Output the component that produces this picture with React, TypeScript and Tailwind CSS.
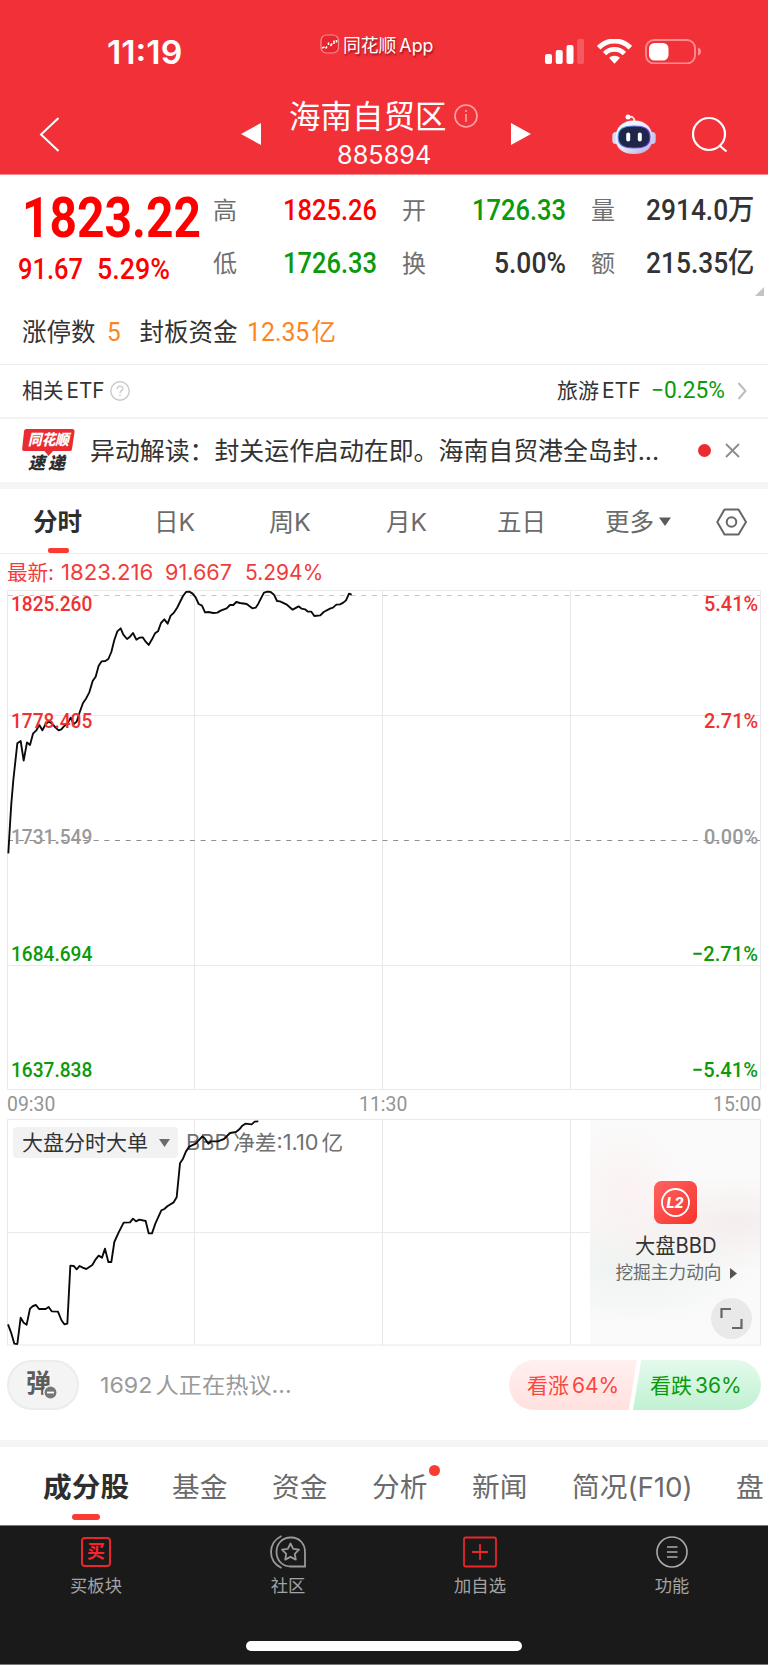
import { ReactNode, useLayoutEffect, useRef } from "react";
import clsx from "clsx";

type FitProps = {
  w: number;
  className?: string;
  children: ReactNode;
};

// Squeezes or stretches a line of text so that it fills exactly `w` pixels.
function Fit({ w, className, children }: FitProps) {
  const ref = useRef<HTMLSpanElement>(null);

  useLayoutEffect(() => {
    const el = ref.current;
    if (el) el.style.transform = `scaleX(${w / el.offsetWidth})`;
  }, [w, children]);

  return (
    <span className={clsx("block shrink-0", className)} style={{ width: w }}>
      <span ref={ref} className="inline-block origin-left whitespace-nowrap">
        {children}
      </span>
    </span>
  );
}

// Narrow gap between Chinese and Latin runs
function Gap() {
  return <i className="inline-block w-[3px]" />;
}

const DIN = "font-['Roboto','Noto_Sans_CJK_SC',sans-serif]";

const PRICE_LINE =
  "25,910 29,840 34,760 40,690 46,635 52,580 62,573 71,632 81,577 90,585 99,551 109,541 118,525 127,541 137,522 146,515 156,520 166,532 176,541 184,538 193,528 203,520 212,503 222,522 230,515 240,484 249,459 258,446 268,427 278,393 287,380 296,347 305,334 316,333 325,327 334,306 343,270 352,244 362,235 370,254 381,267 390,260 399,249 409,269 418,263 428,262 437,275 446,285 456,268 465,250 474,244 483,219 493,208 503,221 512,197 521,189 531,174 540,156 549,138 558,126 568,125 578,131 587,142 596,162 606,167 615,187 625,186 640,189 652,188 662,182 680,175 690,165 700,165 709,156 720,159 740,162 757,175 767,173 775,161 784,143 792,128 803,125 812,126 822,134 831,153 840,154 859,163 878,179 896,169 905,176 915,178 924,185 934,185 943,198 961,196 971,186 990,176 999,173 1009,164 1020,163 1030,158 1038,151 1047,131 1055,134";

const BBD_LINE =
  "24,643 33,667 43,701 52,702 62,623 71,638 80,644 90,596 99,588 108,585 117,597 137,597 146,591 155,604 174,605 184,630 193,643 202,641 211,467 221,468 230,478 239,468 248,473 259,477 277,465 287,448 296,437 306,443 315,416 325,456 334,456 343,396 356,367 371,338 390,337 399,326 408,334 418,329 437,333 446,370 456,370 466,341 484,301 493,297 503,288 521,277 530,262 540,160 549,146 558,124 568,110 587,101 596,91 607,79 615,86 625,101 634,94 653,94 672,87 690,69 708,66 718,58 727,47 736,41 755,43 764,35 775,34";

function StatusBar() {
  return (
    <div className="relative flex h-[84px] pt-[39px]">
      <Fit w={75} className="ml-[107px] text-[32px] font-semibold leading-[28px]">
        11:19
      </Fit>

      <div className="absolute left-[320px] top-[34px] flex h-[20px] items-center">
        <svg width="20" height="20" viewBox="0 0 20 20" fill="none">
          <rect x="1" y="1" width="17.5" height="18" rx="5.5" fill="#e5262e" stroke="#f88b8f" strokeWidth="1.2" />
          <path d="M2 14l2.500-1M5.500 14.500l1.500-2M8.500 11v-2.500M10.500 12l1.500-2.500M14 10V6.500M16.500 8.500V6" stroke="#fff" strokeWidth="1.6" />
        </svg>
        <Fit w={90} className="ml-[3px] mt-[3px] text-[18px] leading-[24px] [text-shadow:1px_2px_2px_rgba(90,0,0,.55)]">
          同花顺
          <Gap />
          App
        </Fit>
      </div>

      <svg className="ml-[363px]" width="39" height="25" viewBox="0 0 39 25" fill="#fff">
        <rect y="15" width="7" height="10" rx="2" />
        <rect x="10.7" y="11" width="7" height="14" rx="2" />
        <rect x="21.5" y="6" width="7" height="19" rx="2" />
        <rect x="32.2" width="7" height="25" rx="2" opacity=".2" />
      </svg>
      <svg className="ml-[13px]" width="35" height="25" viewBox="0 0 35 25" fill="none" stroke="#fff">
        <path d="M1.700 8.700C10.500-.3 24.500-.3 33.300 8.700" strokeWidth="5" />
        <path d="M7.600 14.600C13 9 22 9 27.400 14.600" strokeWidth="4.600" />
        <path d="M12 18.800C15 16 20 16 23 18.800L17.500 24.800Z" fill="#fff" stroke="none" />
      </svg>
      <svg className="ml-[13px]" width="57" height="25" viewBox="0 0 57 25" fill="none">
        <rect x="1" y="1" width="49" height="23.500" rx="8" stroke="#f98f93" strokeWidth="1.800" />
        <rect x="4" y="4" width="19.500" height="17.500" rx="5.500" fill="#fff" />
        <path d="M53 8.500c4 1 4 7 0 8z" fill="#f98f93" />
      </svg>
    </div>
  );
}

function Robot() {
  return (
    <svg width="44" height="41" viewBox="0 0 44 41" fill="none">
      <defs>
        <linearGradient id="shell" x1="10" y1="5" x2="34" y2="41" gradientUnits="userSpaceOnUse">
          <stop stopColor="#fff" />
          <stop offset=".6" stopColor="#e4e3f8" />
          <stop offset="1" stopColor="#b4b4e2" />
        </linearGradient>
        <linearGradient id="visor" x1="6" y1="12" x2="38" y2="36" gradientUnits="userSpaceOnUse">
          <stop stopColor="#3cc3e8" />
          <stop offset=".5" stopColor="#7a5cf0" />
          <stop offset="1" stopColor="#5a2dcc" />
        </linearGradient>
      </defs>
      <path d="M16 3c4-1 6.500 0 6.500 5" stroke="#f7e3ea" strokeWidth="1.600" />
      <circle cx="16" cy="3" r="2.500" fill="#fff" />
      <rect x=".3" y="18" width="7" height="12" rx="3.500" fill="#d9d8f6" />
      <rect x="36.700" y="18" width="7" height="12" rx="3.500" fill="#c9c8ee" />
      <path d="M22 6.500C34 6.500 40.500 14 40.500 24S34 40 22 40 3.500 34 3.500 24 10 6.500 22 6.500z" fill="url(#shell)" />
      <path d="M22 11.500C33.500 11.500 38.500 14.500 38.500 23S33.500 34.500 22 34.500 5.500 31.500 5.500 23 10.500 11.500 22 11.500z" fill="url(#visor)" />
      <path d="M22 12.500C32.500 12.500 37.300 15.200 37.300 23S32.500 33.500 22 33.500 6.700 30.800 6.700 23 11.500 12.500 22 12.500z" fill="#1e2649" />
      <rect x="14.200" y="18.500" width="4" height="9" rx="2" fill="#fff" />
      <rect x="25.800" y="18.500" width="4" height="9" rx="2" fill="#fff" />
    </svg>
  );
}

function NavBar() {
  return (
    <div className="flex h-[90px] pb-[5px]">
      <svg className="ml-[39px] mt-[33px]" width="21" height="35" viewBox="0 0 21 35" fill="none">
        <path d="M19.500 1L2 17.500 19.500 34" stroke="#fff" strokeWidth="2" />
      </svg>
      <svg className="ml-[181px] mt-[39px]" width="20" height="22" viewBox="0 0 20 22" fill="#fff">
        <path d="M0 11L20 0v22z" />
      </svg>
      <div className="ml-[28px] mt-[13px] w-[190px]">
        <div className="flex items-center">
          <span className="text-[31.5px] leading-[40px]">海南自贸区</span>
          <svg className="-mt-[2px] ml-[7px]" width="24" height="24" viewBox="0 0 24 24" fill="none" stroke="#fba5a8" strokeWidth="1.6">
            <circle cx="12" cy="12" r="11" />
            <path d="M12 10v8M12 6v2" />
          </svg>
        </div>
        <Fit w={94} className="-mt-px ml-[48px] text-[25px] leading-[38px]">
          885894
        </Fit>
      </div>
      <svg className="ml-[32px] mt-[39px]" width="20" height="22" viewBox="0 0 20 22" fill="#fff">
        <path d="M20 11L0 0v22z" />
      </svg>
      <div className="ml-[81px] mt-[30px]">
        <Robot />
      </div>
      <svg className="ml-[36px] mt-[32px]" width="36" height="37" viewBox="0 0 36 37" fill="none" stroke="#fff" strokeWidth="2.2">
        <circle cx="17" cy="18" r="16" />
        <path d="M27.500 29.500l7 6" />
      </svg>
    </div>
  );
}

function Stat({ label, value, w, className }: { label: string; value: ReactNode; w: number; className: string }) {
  return (
    <div className="flex h-[53px] items-center justify-between">
      <span className="mt-[2px] text-[24px] text-[#707070]">{label}</span>
      <Fit w={w} className={clsx(DIN, "text-[29px] font-medium leading-[40px]", className)}>
        {value}
      </Fit>
    </div>
  );
}

function Quote() {
  return (
    <section className="border-b border-[#ececec]">
      <div className="relative flex h-[114px]">
        <div className={clsx(DIN, "w-[213px] text-[#fe0000]")}>
          <Fit w={179} className="ml-[22px] text-[56px] font-bold leading-[87px]">
            1823.22
          </Fit>
          <div className="-mt-[13px] flex text-[29px] font-medium leading-[40px]">
            <Fit w={65} className="ml-[18px]">
              91.67
            </Fit>
            <Fit w={73} className="ml-[14px]">
              5.29%
            </Fit>
          </div>
        </div>
        <div className="w-[164px] pt-[8px]">
          <Stat label="高" value="1825.26" w={94} className="text-[#fe0000]" />
          <Stat label="低" value="1726.33" w={94} className="text-[#0b9a0b]" />
        </div>
        <div className="ml-[25px] w-[164px] pt-[8px]">
          <Stat label="开" value="1726.33" w={94} className="text-[#0b9a0b]" />
          <Stat label="换" value="5.00%" w={72} className="text-[#333]" />
        </div>
        <div className="ml-[25px] w-[163px] pt-[8px]">
          <Stat label="量" value="2914.0万" w={108} className="text-[#333]" />
          <Stat label="额" value="215.35亿" w={108} className="text-[#333]" />
        </div>
        <svg className="absolute bottom-[-7px] right-[4px]" width="9" height="9" viewBox="0 0 9 9">
          <path d="M9 0v9H0z" fill="#c4c4c4" />
        </svg>
      </div>
      <div className="mt-[11px] flex h-[64px] items-center text-[24.5px] leading-[40px] text-[#333]">
        <span className="ml-[22px]">涨停数</span>
        <Fit w={14} className={clsx(DIN, "ml-[11px] text-[26px] text-[#fb861e]")}>
          5
        </Fit>
        <span className="ml-[19px]">封板资金</span>
        <Fit w={62} className={clsx(DIN, "ml-[9px] text-[26px] text-[#fb861e]")}>
          12.35
        </Fit>
        <span className="ml-[3px] text-[#fb861e]">亿</span>
      </div>
    </section>
  );
}

function EtfRow() {
  return (
    <div className="flex h-[54px] items-center border-b-2 border-[#f3f3f3] text-[21px] leading-[30px] text-[#333]">
      <Fit w={83} className="ml-[22px]">
        相关
        <Gap />
        ETF
      </Fit>
      <svg className="ml-[5px]" width="20" height="20" viewBox="0 0 20 20" fill="none" stroke="#c9c9c9" strokeWidth="1.4">
        <circle cx="10" cy="10" r="9.200" />
        <path d="M7.200 8c0-4 5.800-3.600 5.600-.2C12.700 9.700 10 9.700 10 12M10 13.500v1.600" />
      </svg>
      <Fit w={84} className="ml-[427px]">
        旅游
        <Gap />
        ETF
      </Fit>
      <Fit w={74} className={clsx(DIN, "ml-[10px] text-[23px] text-[#0b9a0b]")}>
        −0.25%
      </Fit>
      <svg className="ml-[12px]" width="10" height="18" viewBox="0 0 10 18" fill="none" stroke="#bdbdbd" strokeWidth="2">
        <path d="M1.500 1L8.500 9l-7 8" />
      </svg>
    </div>
  );
}

function NewsRow() {
  return (
    <div className="flex h-[63px] items-center leading-[30px]">
      <div className="ml-[22px] w-[54px]">
        <div className="relative">
          <svg className="block" width="54" height="27" viewBox="0 0 54 27" fill="#ea2b30">
            <path d="M4.500 0H50c2 0 2.800 1 2.500 3L50 20c-.3 1.500-1 2-2.500 2H31l-4.500 5-4-5H2C.5 22 0 21 .2 19.500L2 2.500C2.200.8 3 0 4.500 0z" />
          </svg>
          <Fit w={41} className="absolute left-[6px] top-[3px] text-[15px] font-black italic leading-[16px] text-white">
            同花顺
          </Fit>
        </div>
        <div className="-mt-px ml-[6px] flex gap-[3px] text-[17px] font-black italic leading-[17px] text-[#2d2d2d]">
          <span>速</span>
          <span>递</span>
        </div>
      </div>
      <Fit w={569} className="ml-[14px] text-[24.5px] text-[#333]">
        异动解读：封关运作启动在即。海南自贸港全岛封...
      </Fit>
      <span className="ml-[39px] size-[13px] rounded-full bg-[#ea2b30]" />
      <svg className="ml-[14px]" width="15" height="15" viewBox="0 0 15 15" stroke="#8c8c8c" strokeWidth="1.8">
        <path d="M1 1l13 13M14 1L1 14" />
      </svg>
    </div>
  );
}

function PeriodTabs() {
  return (
    <div className="relative flex h-[65px] items-center border-b border-[#ececec] pt-[2px] text-[24.5px] leading-[40px] text-[#6b6b6b]">
      <span className="ml-[33px] w-[49px] font-bold text-[#2e2e2e]">分时</span>
      <Fit w={41} className="ml-[72px]">
        日K
      </Fit>
      <Fit w={42} className="ml-[74px]">
        周K
      </Fit>
      <Fit w={41} className="ml-[75px]">
        月K
      </Fit>
      <span className="ml-[70px] w-[49px]">五日</span>
      <span className="ml-[59px] w-[49px]">更多</span>
      <svg className="-mt-px ml-[5px]" width="12" height="9" viewBox="0 0 12 9" fill="#5c5c5c">
        <path d="M0 .5h12L6 9z" />
      </svg>
      <svg className="-mt-px ml-[45px]" width="31" height="28" viewBox="0 0 31 28" fill="none" stroke="#666" strokeWidth="2">
        <path d="M8.500 1.500h14L30 14l-7.500 12.500h-14L1.300 14z" strokeLinejoin="round" />
        <circle cx="15.500" cy="14" r="4.800" />
      </svg>
      <span className="absolute bottom-0 left-[48px] h-[5px] w-[21px] rounded-[2px] bg-[#fb3a31]" />
    </div>
  );
}

const AXIS = [
  { price: "1825.260", pct: "5.41%", w: 54, color: "text-[#ee3131]" },
  { price: "1778.405", pct: "2.71%", w: 54, color: "text-[#ee3131]" },
  { price: "1731.549", pct: "0.00%", w: 54, color: "text-[#999]" },
  { price: "1684.694", pct: "−2.71%", w: 66, color: "text-[#0b9a0b]" },
  { price: "1637.838", pct: "−5.41%", w: 66, color: "text-[#0b9a0b]" },
];

function PriceChart() {
  return (
    <section>
      <div className="flex h-[36px] items-center pt-[2px] text-[21px] leading-[34px] text-[#f03c3c]">
        <Fit w={47} className="ml-[7px]">
          最新:
        </Fit>
        <Fit w={92} className="ml-[7px]">
          1823.216
        </Fit>
        <Fit w={67} className="ml-[12px]">
          91.667
        </Fit>
        <Fit w={78} className="ml-[13px]">
          5.294%
        </Fit>
      </div>
      <div className="relative ml-[7px] h-[500px] w-[754px]">
        <svg className="block" width="754" height="500" viewBox="0 0 754 500" fill="none">
          <path d="M.5.5h753v499H.5zM187.500 0v500M375.500 0v500M563.500 0v500M0 125.500h754M0 375.500h754" stroke="#e9e9e9" />
          <path d="M1 5.500h752" stroke="#dcc3a0" strokeDasharray="5 5.7" />
          <path d="M1 250.500h752" stroke="#8f8f8f" strokeDasharray="5 5.7" />
          <polyline points={PRICE_LINE} transform="translate(-7 -40) scale(.33333)" stroke="#0a0a0a" strokeWidth="5.6" strokeLinejoin="round" />
        </svg>
        <div className={clsx(DIN, "absolute inset-x-0 top-[-1px] flex flex-col gap-[86.6px] pl-[4px] pr-[3px] text-[21px] font-medium leading-[30px]")}>
          {AXIS.map((row) => (
            <div key={row.price} className={clsx("flex h-[30px] justify-between", row.color)}>
              <Fit w={81}>{row.price}</Fit>
              <Fit w={row.w}>{row.pct}</Fit>
            </div>
          ))}
        </div>
      </div>
      <div className={clsx(DIN, "flex h-[29px] pl-[7px] text-[21px] leading-[29px] text-[#949494]")}>
        <Fit w={48}>09:30</Fit>
        <Fit w={48} className="ml-[304px]">
          11:30
        </Fit>
        <Fit w={48} className="ml-[306px]">
          15:00
        </Fit>
      </div>
    </section>
  );
}

function BbdChart() {
  return (
    <section className="relative ml-[7px] h-[227px] w-[754px]">
      <svg className="block" width="754" height="227" viewBox="0 0 754 227" fill="none">
        <path d="M.5.500h753v225.500H.5zM187.500 0v227M375.500 0v227M563.500 0v227M0 113.500h754" stroke="#e9e9e9" />
      </svg>
      <div className="absolute left-[6px] top-[8px] flex h-[31px] items-center rounded-[4px] bg-[#f2f2f2] text-[21px] leading-[31px]">
        <Fit w={126} className="ml-[9px] text-[#333]">
          大盘分时大单
        </Fit>
        <svg className="ml-[11px] mr-[8px]" width="11" height="8" viewBox="0 0 11 8" fill="#6b6b6b">
          <path d="M0 0h11L5.500 8z" />
        </svg>
      </div>
      <Fit w={157} className="absolute left-[179px] top-[8px] text-[21px] leading-[31px] text-[#707070]">
        BBD
        <Gap />
        净差:1.10
        <Gap />亿
      </Fit>
      <svg className="absolute left-0 top-0" width="754" height="227" viewBox="0 0 754 227" fill="none">
        <polyline points={BBD_LINE} transform="translate(-7 -9) scale(.33333)" stroke="#0a0a0a" strokeWidth="5.6" strokeLinejoin="round" />
      </svg>
      <div className="absolute right-[1px] top-[1px] flex h-[224px] w-[170px] flex-col items-center bg-[#fafafa] bg-[radial-gradient(ellipse_60px_75px_at_20%_34%,#fbf1f1,transparent),radial-gradient(ellipse_130px_48px_at_85%_46%,#f6eded,transparent),radial-gradient(ellipse_130px_65px_at_25%_64%,#edf3f0,transparent)]">
        <svg className="mt-[61px]" width="43" height="43" viewBox="0 0 43 43">
          <defs>
            <linearGradient id="l2" x1="0" y1="0" x2="1" y2="1">
              <stop stopColor="#ff6360" />
              <stop offset="1" stopColor="#f8332d" />
            </linearGradient>
          </defs>
          <rect width="43" height="43" rx="7.5" fill="url(#l2)" />
          <circle cx="21.500" cy="21.500" r="13.500" fill="none" stroke="#fff" strokeWidth="1.8" />
          <text x="21" y="26.500" textAnchor="middle" fill="#fff" fontSize="14" fontWeight="800" fontStyle="italic" textLength="17" lengthAdjust="spacingAndGlyphs">
            L2
          </text>
        </svg>
        <Fit w={82} className="ml-px mt-[7px] text-[21px] leading-[30px] text-[#333]">
          大盘BBD
        </Fit>
        <div className="ml-[2px] flex items-center text-[17.7px] leading-[24px] text-[#6b6b6b]">
          <span>挖掘主力动向</span>
          <svg className="ml-[8px]" width="7" height="11" viewBox="0 0 7 11" fill="#555">
            <path d="M0 0l7 5.500L0 11z" />
          </svg>
        </div>
        <svg className="absolute bottom-[5px] right-[8px]" width="41" height="41" viewBox="0 0 41 41" fill="none" stroke="#666" strokeWidth="2.2">
          <circle cx="20.500" cy="20.500" r="20.500" fill="#e9e9e9" stroke="none" />
          <path d="M10.500 20v-9h9.500M30.500 21v9H21" />
        </svg>
      </div>
    </section>
  );
}

function Discussion() {
  return (
    <div className="flex h-[94px] pt-[14px] leading-[51px]">
      <div className="relative ml-[7px] h-[50px] w-[72px] rounded-full border-2 border-[#ececec] bg-[#f4f4f4]">
        <span className="absolute left-[17px] top-[-4px] text-[25px] font-bold text-[#5c5c5c]">弹</span>
        <svg className="absolute left-[34px] top-[23px]" width="15" height="15" viewBox="0 0 15 15">
          <circle cx="7.500" cy="7.500" r="6.700" fill="#777" stroke="#f4f4f4" strokeWidth="1.5" />
          <path d="M4 7.500h7" stroke="#fff" strokeWidth="1.8" />
        </svg>
      </div>
      <Fit w={192} className="ml-[21px] text-[22px] text-[#999]">
        1692
        <Gap />
        人正在热议...
      </Fit>
      <div className="ml-[217px] flex h-[50px] w-[128px] rounded-l-full rounded-r-[5px] bg-linear-to-b from-[#fff0ef] to-[#ffe1df] text-[21px] text-[#fb473f] [clip-path:polygon(0_0,100%_0,93.5%_100%,0_100%)]">
        <Fit w={92} className="ml-[18px]">
          看涨
          <Gap />
          64%
        </Fit>
      </div>
      <div className="-ml-[4px] flex h-[50px] w-[128px] rounded-l-[5px] rounded-r-full bg-linear-to-b from-[#e4faec] to-[#c0f1d3] text-[21px] text-[#0b9a0b] [clip-path:polygon(6.5%_0,100%_0,100%_100%,0_100%)]">
        <Fit w={92} className="ml-[17px]">
          看跌
          <Gap />
          36%
        </Fit>
      </div>
    </div>
  );
}

function SectionTabs() {
  return (
    <div className="relative flex h-[78px] items-center overflow-hidden whitespace-nowrap pt-[2px] text-[27.7px] leading-[40px] text-[#6b6b6b]">
      <Fit w={86} className="ml-[43px] font-bold text-[#2e2e2e]">
        成分股
      </Fit>
      <span className="ml-[43px] w-[56px]">基金</span>
      <span className="ml-[44px] w-[56px]">资金</span>
      <span className="relative ml-[44px] w-[56px]">
        分析
        <i className="absolute -right-[12px] -top-[2px] size-[11px] rounded-full bg-[#fb3a31]" />
      </span>
      <span className="ml-[44px] w-[56px]">新闻</span>
      <Fit w={121} className="ml-[44px]">
        简况(F10)
      </Fit>
      <span className="ml-[43px]">盘</span>
      <span className="absolute bottom-[5px] left-[72px] h-[6px] w-[28px] rounded-[3px] bg-[#fb3a31]" />
    </div>
  );
}

function BottomBar() {
  const items = [
    {
      label: "买板块",
      icon: (
        <div className="grid size-[30px] place-items-center rounded-[4px] border-2 border-[#e8262c] text-[18px] font-bold leading-[24px] text-[#fb2231]">
          买
        </div>
      ),
    },
    {
      label: "社区",
      icon: (
        <svg width="36" height="34" viewBox="0 0 36 34" fill="none" stroke="#999" strokeWidth="1.8">
          <path d="M11.500 1C-2.500 8-2.500 26 11.500 33M20.500 2.500h1C29.500 2.500 35 9 35 17v14.500H21C12 31.500 6.500 25 6.500 17S12 2.500 20.500 2.500z" />
          <path d="M20.500 8.500l2.700 5.300 5.800.9-4.200 4.100 1 5.800-5.300-2.700-5.300 2.700 1-5.800-4.200-4.100 5.800-.9z" strokeLinejoin="round" />
        </svg>
      ),
    },
    {
      label: "加自选",
      icon: (
        <svg width="34" height="32" viewBox="0 0 34 32" fill="none" stroke="#e8262c" strokeWidth="1.8">
          <rect x="1" y="1.500" width="32" height="29" rx="1.5" />
          <path d="M17 8v16M9 16h16" />
        </svg>
      ),
    },
    {
      label: "功能",
      icon: (
        <svg width="32" height="32" viewBox="0 0 32 32" fill="none" stroke="#aaa" strokeWidth="1.6">
          <circle cx="16" cy="16" r="15" />
          <path d="M11 11h10.500M11 16h10.500M11 21h10.500" />
        </svg>
      ),
    },
  ];

  return (
    <nav className="h-[140px] border-y border-[#777] bg-[#1a1a1a] pt-[9px]">
      <div className="grid grid-cols-4">
        {items.map((item) => (
          <div key={item.label} className="flex flex-col items-center">
            <div className="flex h-[34px] items-center">{item.icon}</div>
            <span className="mt-[4px] text-[17.3px] leading-[25px] text-[#a3a3a3]">{item.label}</span>
          </div>
        ))}
      </div>
      <div className="mx-auto mt-[43px] h-[10px] w-[276px] rounded-full bg-white" />
    </nav>
  );
}

export default function App() {
  return (
    <main className="h-[1665px] w-[768px] overflow-hidden bg-white font-['Inter','Noto_Sans_CJK_SC',sans-serif]">
      <header className="h-[175px] border-b border-[#f8888d] bg-[#f23038] text-white">
        <StatusBar />
        <NavBar />
      </header>
      <Quote />
      <EtfRow />
      <NewsRow />
      <div className="h-[7px] bg-[#f5f5f5]" />
      <PeriodTabs />
      <PriceChart />
      <BbdChart />
      <Discussion />
      <div className="h-[7px] bg-[#f5f5f5]" />
      <SectionTabs />
      <BottomBar />
    </main>
  );
}
